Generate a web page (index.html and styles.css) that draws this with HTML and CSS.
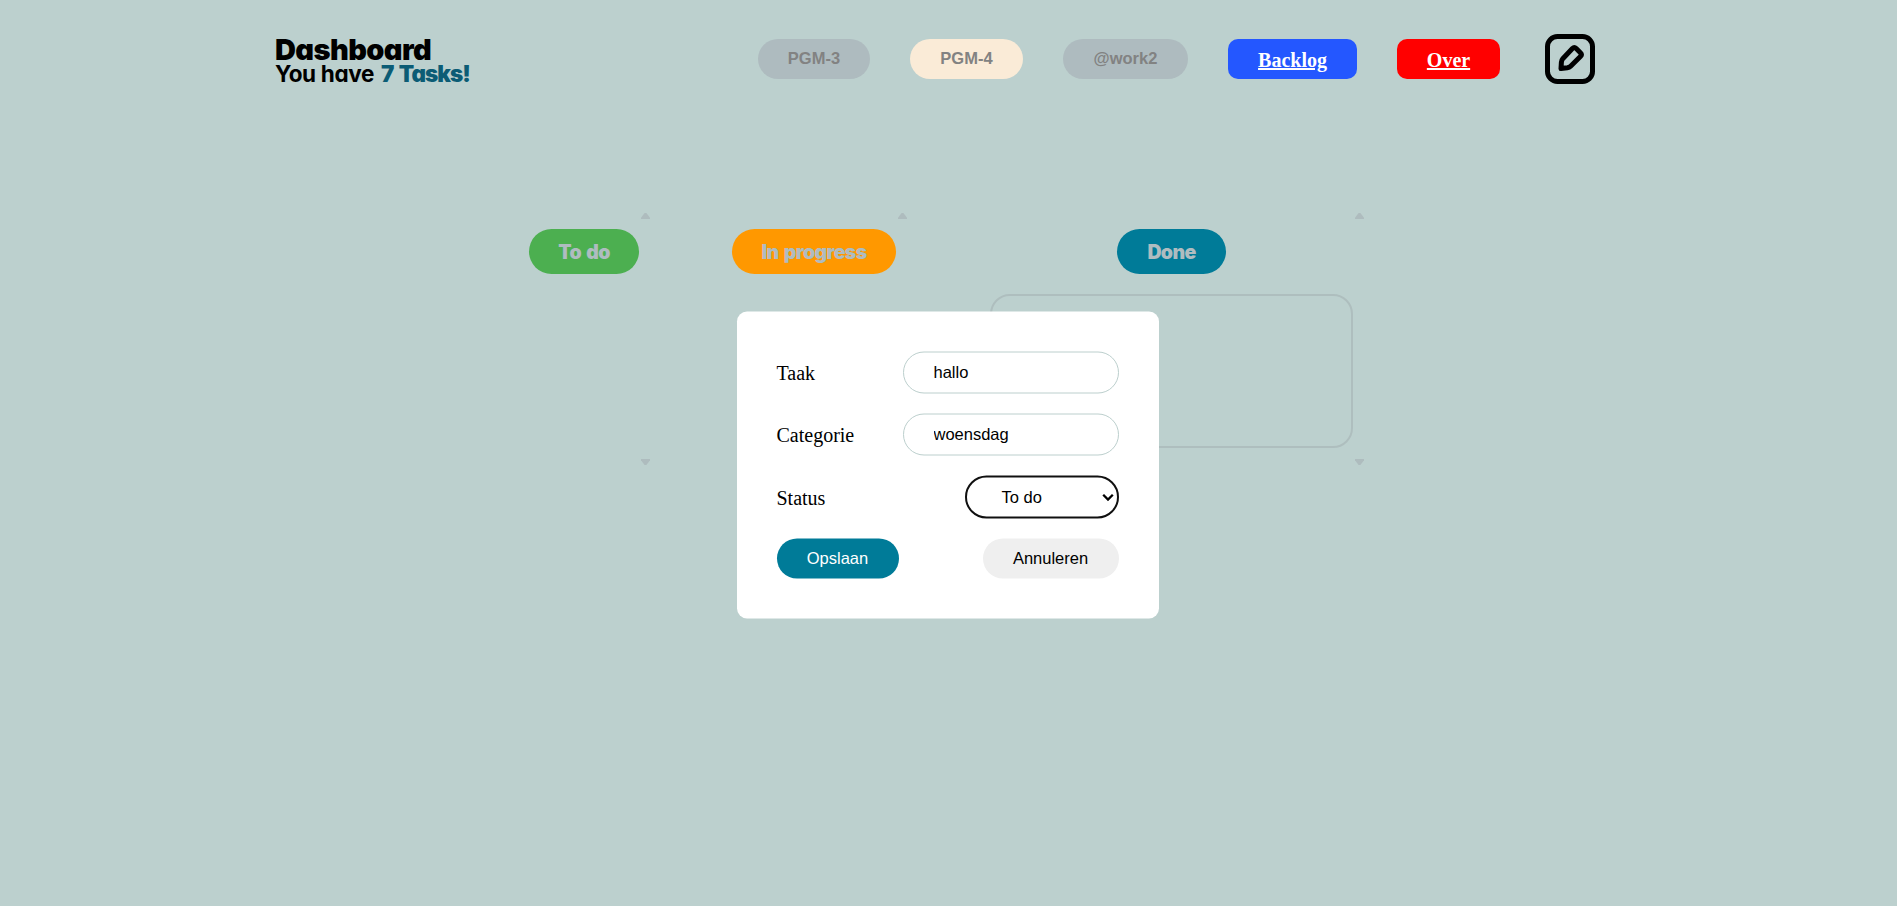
FILE: index.html
```
<!DOCTYPE html>
<html lang="nl">
<head>
<meta charset="utf-8">
<title>Dashboard</title>
<link rel="stylesheet" href="styles.css">
</head>
<body>
<header class="header">
  <div class="intro">
    <h1 class="title">Dashboard</h1>
    <p class="subtitle"><span class="have">You have</span><strong class="count">7 Tasks!</strong></p>
  </div>
  <nav class="nav">
    <button class="filter w-pgm3">PGM-3</button>
    <button class="filter active w-pgm4">PGM-4</button>
    <button class="filter w-work">@work2</button>
    <a class="link backlog" href="#">Backlog</a>
    <a class="link over" href="#">Over</a>
    <svg class="edit" viewBox="0 0 50 50" fill="none" stroke="#000" stroke-width="5" stroke-linejoin="round">
      <rect x="2.5" y="2.5" width="45" height="45" rx="10"/>
      <path d="M27.4 14.6Q29.3 12.7 31.2 14.6L35.4 18.8Q37.3 20.7 35.4 22.6L25.6 32.2Q24.3 33.5 22.3 33.8L16 34.6L16.4 28.2Q16.6 26 18 24.4Z"/>
    </svg>
  </nav>
</header>
<main class="board">
  <section class="column todo">
    <div class="content"><h2 class="pill green">To do</h2></div>
    <div class="scroll"><i class="up"></i><i class="down"></i></div>
  </section>
  <section class="column progress">
    <div class="content"><h2 class="pill orange">In progress</h2></div>
    <div class="scroll"><i class="up"></i><i class="down"></i></div>
  </section>
  <section class="column done">
    <div class="content"><h2 class="pill teal">Done</h2><article class="card"></article></div>
    <div class="scroll"><i class="up"></i><i class="down"></i></div>
  </section>
</main>
<form class="modal">
  <div class="row"><label for="task">Taak</label><input class="field" id="task" value="hallo"></div>
  <div class="row"><label for="category">Categorie</label><input class="field" id="category" value="woensdag"></div>
  <div class="row status"><label>Status</label>
    <div class="select"><span>To do</span><svg class="chevron" viewBox="0 0 12 8" fill="none" stroke="#000" stroke-width="2.3"><path d="M1.2 1.2L6 6L10.8 1.2"/></svg></div>
  </div>
  <div class="row"><button class="save" type="button">Opslaan</button><button class="cancel" type="button">Annuleren</button></div>
</form>
</body>
</html>
```
FILE: styles.css
```
* { box-sizing: border-box; }
body {
  margin: 0;
  height: 906px;
  overflow: hidden;
  background: #bcd0ce;
  font-family: "Liberation Serif", serif;
  font-size: 20px;
}
h1, h2, p { margin: 0; }
button { border: 0; padding: 0; }
.header {
  display: flex;
  justify-content: space-between;
  align-items: flex-start;
  padding: 34px 302px 0 275px;
  height: 209px;
}
.intro { padding-top: 4px; white-space: nowrap; }
.title, .subtitle, .pill {
  font-family: Inter, sans-serif;
  font-feature-settings: "cv11";
  font-weight: 900;
}
.title { font-size: 29px; line-height: 24px; letter-spacing: -0.6px; }
.subtitle { display: flex; gap: 7px; font-size: 22.5px; line-height: 24px; letter-spacing: -0.35px; font-weight: 700; }
.count { color: #0b5c75; font-weight: 900; letter-spacing: -1px; word-spacing: 2px; }
.nav { display: flex; align-items: center; gap: 40px; height: 50px; }
.filter {
  height: 40px;
  padding-bottom: 1px;
  border-radius: 20px;
  background: #aebbbf;
  color: #828282;
  font: bold 16.5px "Liberation Sans", sans-serif;
}
.w-pgm3 { width: 112px; }
.w-pgm4 { width: 113px; }
.w-work { width: 125px; }
.filter.active { background: #faebd7; }
.link {
  height: 40px;
  line-height: 42px;
  border-radius: 10px;
  color: #fff;
  font-weight: bold;
  text-align: center;
}
.backlog { width: 129px; background: #2457ff; }
.over { width: 103px; background: #f00; }
.edit { width: 50px; height: 50px; margin-left: 5px; }
.board { display: flex; padding-left: 529px; height: 260px; }
.column { display: flex; }
.todo { width: 124px; margin-right: 79px; }
.progress { width: 178px; margin-right: 80px; }
.done { width: 377px; }
.content { flex: 1; padding-top: 20px; }
.pill {
  display: flex;
  align-items: center;
  justify-content: center;
  height: 45px;
  margin: 0 auto;
  border-radius: 23px;
  color: #afbcc0;
  font-size: 19.5px;
  letter-spacing: -0.65px;
  word-spacing: 2px;
  white-space: nowrap;
}
.green { width: 110px; background: #4caf50; }
.orange { width: 164px; background: #ff9800; }
.teal { width: 109px; background: #007b98; }
.card {
  height: 154px;
  margin-top: 20px;
  border: 2px solid #aebebe;
  border-radius: 20px;
}
.scroll {
  display: flex;
  flex-direction: column;
  justify-content: space-between;
  align-items: center;
  width: 14px;
  padding: 4px 1px 4px 0;
}
.up, .down { width: 9px; height: 6px; background: #aebcbe; }
.up { clip-path: polygon(40% 0, 60% 0, 100% 80%, 100% 100%, 0 100%, 0 80%); }
.down { clip-path: polygon(0 0, 100% 0, 100% 20%, 60% 100%, 40% 100%, 0 20%); }
.modal {
  position: absolute;
  left: calc(50% - 1px);
  top: 465px;
  transform: translate(-50%, -50%);
  width: 422px;
  height: 307px;
  display: flex;
  flex-direction: column;
  gap: 20px;
  padding: 40px;
  border-radius: 10px;
  background: #fff;
}
.row { display: flex; justify-content: space-between; align-items: center; }
.row label { padding-top: 1px; }
.field {
  width: 216px;
  height: 42px;
  padding: 0 30px 2px;
  border: 1px solid #bccfcd;
  border-radius: 21px;
  outline: 0;
  color: #000;
  font: 16.5px "Liberation Sans", sans-serif;
}
.select {
  display: flex;
  align-items: center;
  justify-content: space-between;
  width: 154px;
  height: 43px;
  padding: 0 3px 0 35px;
  border: 2px solid #101010;
  border-radius: 22px;
  font: 16.5px "Liberation Sans", sans-serif;
}
.chevron { width: 12px; height: 8px; }
.save, .cancel {
  height: 40px;
  padding-bottom: 1px;
  border-radius: 20px;
  font: 16.5px "Liberation Sans", sans-serif;
}
.save { width: 122px; background: #007b98; color: #fff; }
.cancel { width: 136px; background: #efefef; color: #000; }
```
